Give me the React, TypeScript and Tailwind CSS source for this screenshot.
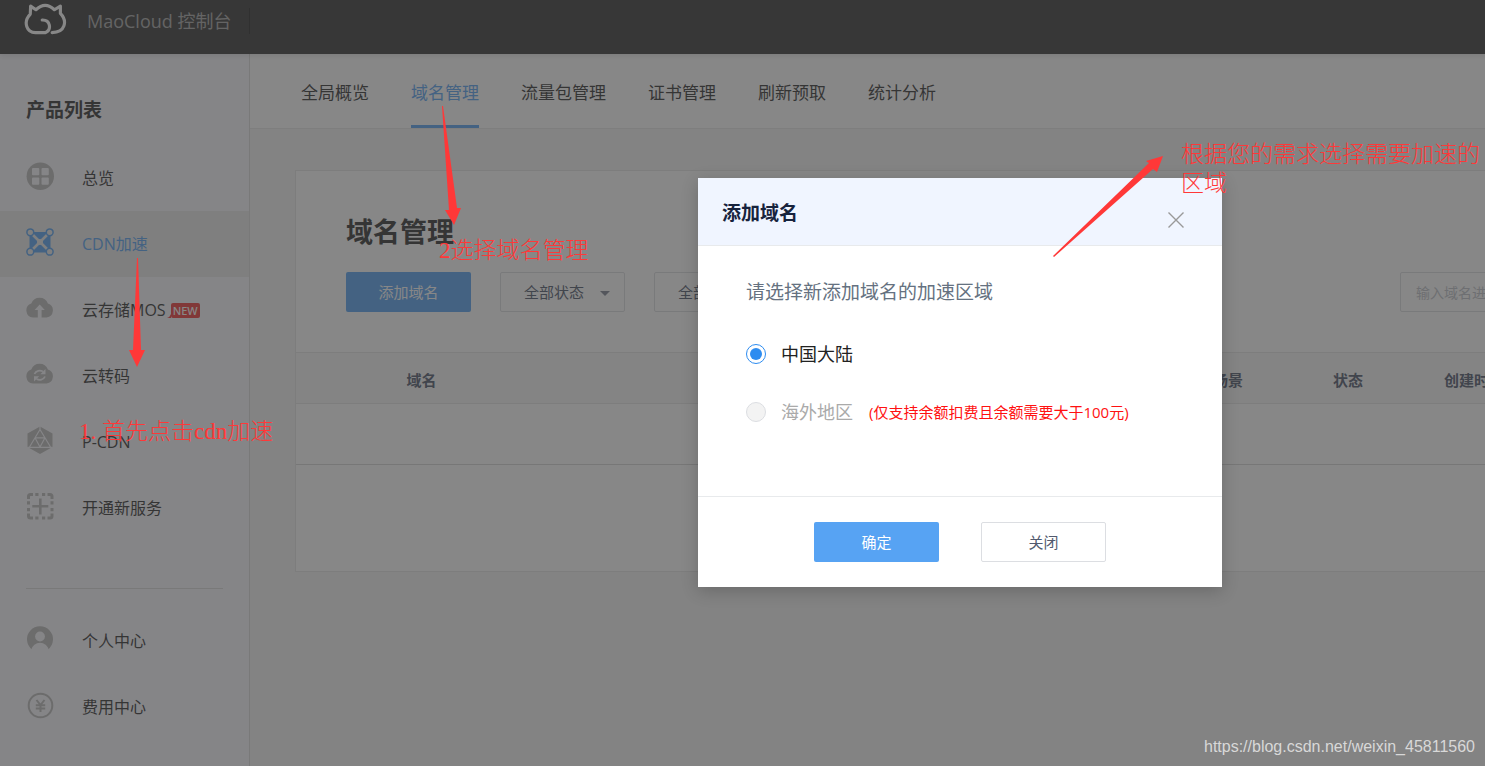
import type { ReactNode } from "react";

/* ── Icons ── */

function CatLogo() {
  return (
    <svg
      viewBox="72 12 130 96"
      className="mb-1 h-8 w-[43px]"
      fill="none"
      stroke="white"
      strokeWidth="9.500"
      strokeLinecap="round"
      strokeLinejoin="round"
    >
      <path d="M127 63C152 62 156 92 137 101H108C80 102 68 69 91 45L92 21L108 32Q136 6 164 32L182 21V43C204 66 197 101 157 101" />
    </svg>
  );
}

function OverviewIcon() {
  return (
    <svg viewBox="0 0 28 28" className="size-7">
      <circle cx="14.300" cy="14.300" r="13.700" fill="#bbb" />
      <g fill="#fafaff">
        <rect x="6" y="6" width="7.300" height="7.300" rx="1" />
        <rect x="15.500" y="6" width="7.300" height="7.300" rx="1" />
        <rect x="6" y="15.500" width="7.300" height="7.300" rx="1" />
        <rect x="15.500" y="15.500" width="7.300" height="7.300" rx="1" />
      </g>
    </svg>
  );
}

function CdnIcon() {
  return (
    <svg viewBox="0 0 28 28" className="size-7">
      <path d="M3.500 4H24.500V24.500H3.500Z" fill="#57a3f3" />
      <path d="M4 4L24 24M24 4L4 24" stroke="#ebebeb" strokeWidth="2.600" />
      <circle cx="14" cy="14" r="3" fill="#ebebeb" />
      <g fill="#ebebeb" stroke="#57a3f3" strokeWidth="1.500">
        <circle cx="4.300" cy="4.300" r="3.400" />
        <circle cx="23.700" cy="4.300" r="3.400" />
        <circle cx="4.300" cy="23.700" r="3.400" />
        <circle cx="23.700" cy="23.700" r="3.400" />
      </g>
    </svg>
  );
}

const CLOUD = "M7 23.500A7.200 7.200 0 0 1 5.300 9.500A8.900 8.900 0 0 1 21.900 9.500A7.200 7.200 0 0 1 20.500 23.500Z";

function UploadIcon() {
  return (
    <svg viewBox="0 0 28 28" className="size-7">
      <path d={CLOUD} fill="#bbb" />
      <path d="M13.700 10.500L18.800 16H15.600V24H11.800V16H8.600Z" fill="#fafaff" />
    </svg>
  );
}

function TranscodeIcon() {
  return (
    <svg viewBox="0 0 28 28" className="size-7">
      <path d={CLOUD} fill="#bbb" />
      <g fill="none" stroke="#fafaff" strokeWidth="1.800">
        <path d="M8.500 14C10 10.500 14 10 17 11.500" />
        <path d="M19 16.500C17.500 20 13.500 20.500 10.500 19" />
      </g>
      <path d="M19.500 9V14.300H14.300ZM8 21.500V16.200H13.200Z" fill="#fafaff" />
    </svg>
  );
}

function PcdnIcon() {
  return (
    <svg viewBox="0 0 28 28" className="size-7">
      <path d="M14 .5L26.500 7.500V21L14 28L1.500 21V7.500Z" fill="#bbb" />
      <path
        d="M14 0V4M1.500 21.300H26.500M14 3.500L3.500 21M14 3.500L24.500 21M9 11.800H19M9 11.800L14 21L19 11.800"
        fill="none"
        stroke="#fafaff"
        strokeWidth="1.200"
      />
    </svg>
  );
}

function NewServiceIcon() {
  return (
    <svg viewBox="0 0 28 28" className="size-7" fill="none" stroke="#bbb" strokeWidth="3">
      <path d="M2.500 7V4.500Q2.500 2.500 4.500 2.500H7M21.500 2.500H24Q26 2.500 26 4.500V7M26 21.500V24Q26 26 24 26H21.500M7 26H4.500Q2.500 26 2.500 24V21.500" />
      <path d="M9.300 2.500H12.500M16 2.500H19.200M9.300 26H12.500M16 26H19.200M2.500 9.300V12.500M2.500 16V19.200M26 9.300V12.500M26 16V19.200" />
      <path d="M14.300 6.500V22.500M6.300 14.300H22.300" strokeWidth="2.600" />
    </svg>
  );
}

function UserIcon() {
  return (
    <svg viewBox="0 0 28 28" className="size-7">
      <path d="M6 24.500A13 13 0 1 1 22 24.500Z" fill="#bbb" />
      <circle cx="14" cy="11.500" r="4.900" fill="#fafaff" />
      <path d="M5 26C6 20.500 10 17.800 14 17.800S22 20.500 23 26Z" fill="#fafaff" />
    </svg>
  );
}

function FeeIcon() {
  return (
    <svg viewBox="0 0 28 28" className="size-7" fill="none" stroke="#bbb" strokeWidth="2">
      <circle cx="14.500" cy="14.500" r="11.800" />
      <path d="M10.500 9L14.500 14L18.500 9M14.500 14V21M9.800 14.300H19.200M9.800 17.500H19.200" />
    </svg>
  );
}

function NewTail() {
  return (
    <svg viewBox="0 0 4 4" className="size-1 self-end" fill="#f03a3a">
      <path d="M4 0V4H0Q3 3 4 0Z" />
    </svg>
  );
}

/* ── Data ── */

type Item = { label: string; icon: ReactNode; active?: boolean; isNew?: boolean };

const products: Item[] = [
  { label: "总览", icon: <OverviewIcon /> },
  { label: "CDN加速", icon: <CdnIcon />, active: true },
  { label: "云存储MOS", icon: <UploadIcon />, isNew: true },
  { label: "云转码", icon: <TranscodeIcon /> },
  { label: "P-CDN", icon: <PcdnIcon /> },
  { label: "开通新服务", icon: <NewServiceIcon /> },
];

const account: Item[] = [
  { label: "个人中心", icon: <UserIcon /> },
  { label: "费用中心", icon: <FeeIcon /> },
];

const tabs = ["全局概览", "域名管理", "流量包管理", "证书管理", "刷新预取", "统计分析"];

/* ── Page parts ── */

function Header() {
  return (
    <header className="relative z-10 flex h-[54px] bg-[#383838] pb-3 shadow-[0_1px_6px_rgba(0,0,0,0.15)]">
      <div className="my-2 flex w-[250px] items-center gap-5 border-r border-[#262626] pl-6">
        <CatLogo />
        <span className="text-[18px] text-[#a8a8a8]">MaoCloud 控制台</span>
      </div>
    </header>
  );
}

function SideItem({ label, icon, active, isNew }: Item) {
  return (
    <li>
      <a
        href="#"
        className={`flex h-[66px] items-center gap-7 pl-[26px] text-base ${
          active ? "bg-[#ebebeb] text-[#57a3f3]" : "text-[#333]"
        }`}
      >
        <span className="mb-1">{icon}</span>
        <span className="flex items-center">
          {label}
          {isNew && (
            <span className="ml-px flex">
              <NewTail />
              <span className="rounded-xs bg-[#f03a3a] px-[2px] font-['Noto_Sans',sans-serif] text-[11px] leading-[15px] font-medium text-white">
                NEW
              </span>
            </span>
          )}
        </span>
      </a>
    </li>
  );
}

function Sidebar() {
  return (
    <aside className="w-[250px] shrink-0 border-r border-[#dcdcdc] bg-[#fafaff] pt-[41px]">
      <h2 className="mb-5 pl-[26px] text-[19px] leading-[30px] font-bold text-[#333]">产品列表</h2>
      <ul>
        {products.map((p) => (
          <SideItem key={p.label} {...p} />
        ))}
      </ul>
      <hr className="mx-[26px] mt-[47px] mb-[19px] border-[#dcdcdc]" />
      <ul>
        {account.map((p) => (
          <SideItem key={p.label} {...p} />
        ))}
      </ul>
    </aside>
  );
}

function Tabs() {
  return (
    <nav className="flex h-[75px] gap-[42px] border-b border-[#e8e8e8] bg-white pl-[51px]">
      {tabs.map((t) => (
        <a
          key={t}
          href="#"
          className={`flex items-center border-b-[3px] pt-[6px] text-[17px] ${
            t === "域名管理" ? "border-[#57a3f3] text-[#57a3f3]" : "border-transparent text-[#333]"
          }`}
        >
          {t}
        </a>
      ))}
    </nav>
  );
}

function Filter({ label }: { label: string }) {
  return (
    <div className="relative">
      <select
        aria-label={label}
        className="h-10 w-[125px] appearance-none rounded-xs border border-[#dcdee2] bg-white pt-px pl-[23px] text-[15px] text-[#515a6e]"
      >
        <option>{label}</option>
      </select>
      <svg viewBox="0 0 10 5" className="absolute top-[19px] right-[15px] h-[5px] w-[10px]">
        <path d="M0 0H10L5 5Z" fill="#808695" />
      </svg>
    </div>
  );
}

function DomainTable() {
  return (
    <table className="w-full table-fixed text-[15px] text-[#515a6e]">
      <colgroup>
        <col className="w-[251px]" />
        <col className="w-[624px]" />
        <col className="w-[114px]" />
        <col className="w-[126px]" />
        <col className="w-[126px]" />
        <col />
      </colgroup>
      <thead>
        <tr className="h-[51px] border-y border-[#e6e6e6] bg-[#f7f7f7]">
          <th className="pt-1">域名</th>
          <th />
          <th className="pt-1">场景</th>
          <th className="pt-1">状态</th>
          <th className="pt-1">创建时间</th>
          <th />
        </tr>
      </thead>
      <tbody>
        <tr className="h-[61px] border-b border-[#d8d8d8]">
          <td colSpan={6} />
        </tr>
      </tbody>
    </table>
  );
}

function DomainCard() {
  return (
    <section className="mx-[45px] mt-[41px] border border-[#e6e6e6] bg-white pt-[41px] pb-[106px]">
      <h1 className="px-[50px] text-[27px] leading-10 font-bold text-[#333]">域名管理</h1>
      <div className="mt-5 mb-10 flex items-center gap-[29px] px-[50px]">
        <button className="h-10 w-[125px] rounded-xs bg-[#57a3f3] text-[15px] text-white">添加域名</button>
        <Filter label="全部状态" />
        <Filter label="全部区域" />
        <input
          aria-label="搜索域名"
          placeholder="输入域名进行搜索"
          className="ml-auto h-10 w-[424px] rounded-xs border border-[#dcdee2] bg-white px-[15px] text-[14px] placeholder:text-[#c0c3ca]"
        />
      </div>
      <DomainTable />
    </section>
  );
}

function AddDomainDialog() {
  return (
    <div role="dialog" aria-labelledby="dialog-title" className="w-[524px] bg-white shadow-[0_4px_16px_rgba(0,0,0,0.2)]">
      <div className="flex h-[68px] justify-between border-b border-[#e8eaec] bg-[#f0f5ff] pr-[38px] pl-6">
        <h2 id="dialog-title" className="text-[19px] leading-[70px] font-bold text-[#17233d]">
          添加域名
        </h2>
        <button aria-label="关闭窗口" className="mt-4 text-[#999]">
          <svg viewBox="0 0 16 16" className="size-4" fill="none" stroke="currentColor" strokeWidth="1.400">
            <path d="M.5 .5L15.500 15.500M15.500 .5L.5 15.500" />
          </svg>
        </button>
      </div>
      <div className="h-[250px] px-12 pt-[31px]">
        <p className="text-[19px] leading-[30px] text-[#657180]">请选择新添加域名的加速区域</p>
        <label className="mt-8 flex h-[30px] items-center gap-[15px] text-[18px] text-[#222]">
          <input
            type="radio"
            name="area"
            defaultChecked
            className="size-5 appearance-none rounded-full border border-[#2d8cf0] bg-[#2d8cf0] bg-clip-content p-[3px]"
          />
          中国大陆
        </label>
        <div className="mt-7 flex h-[30px] items-center gap-4">
          <label className="flex items-center gap-[15px] text-[18px] text-[#aaa]">
            <input
              type="radio"
              name="area"
              disabled
              className="size-5 appearance-none rounded-full border border-[#dcdee2] bg-[#f3f3f3]"
            />
            海外地区
          </label>
          <span className="text-[15px] text-[#f11]">(仅支持余额扣费且余额需要大于100元)</span>
        </div>
      </div>
      <div className="flex justify-center gap-[42px] border-t border-[#e8eaec] py-[25px] text-[15px]">
        <button className="h-10 w-[125px] rounded-xs bg-[#57a3f3] text-white">确定</button>
        <button className="h-10 w-[125px] rounded-xs border border-[#dcdee2] text-[#515a6e]">关闭</button>
      </div>
    </div>
  );
}

/* Red arrows and hand notes laid over the console */
function Notes() {
  return (
    <div className="pointer-events-none absolute inset-0 font-['Liberation_Serif','Noto_Sans_CJK_SC',serif] text-[23px] leading-[29px] font-light text-[#ff3838]">
      <svg width="1485" height="766" viewBox="0 0 1485 766" className="absolute top-0 left-0" fill="#ff3838">
        <path d="M137 258L138 258L141 350H145L137 367L129 350H133Z" />
        <path d="M442 106L443 106L457 208H461L454 225L445 210H449Z" />
        <path d="M1053 256L1149 163L1146 161L1163 156L1157 172L1153 169L1054 257Z" />
      </svg>
      <p className="absolute top-[417px] left-[79px] whitespace-nowrap">1. 首先点击cdn加速</p>
      <p className="absolute top-[236px] left-[439px] whitespace-nowrap">2选择域名管理</p>
      <p className="absolute top-[140px] left-[1181px] w-[300px]">根据您的需求选择需要加速的区域</p>
    </div>
  );
}

export default function App() {
  return (
    <div className="relative h-screen overflow-hidden font-['Open_Sans','Noto_Sans_CJK_SC',sans-serif]">
      <div className="relative flex min-h-full min-w-[1920px] flex-col">
        <Header />
        <div className="flex flex-1">
          <Sidebar />
          <main className="flex-1 bg-[#f5f5f5]">
            <Tabs />
            <DomainCard />
          </main>
        </div>

        {/* Mask and dialog */}
        <div className="absolute inset-0 z-20 flex items-start justify-center bg-[rgba(55,55,55,0.6)] pt-[178px]">
          <AddDomainDialog />
        </div>
      </div>

      <div className="absolute inset-0 z-30">
        <Notes />
        <p className="absolute right-[10px] bottom-[7px] font-['Liberation_Sans',Arial,sans-serif] text-base text-[#d8d8d8]">
          https://blog.csdn.net/weixin_45811560
        </p>
      </div>
    </div>
  );
}
